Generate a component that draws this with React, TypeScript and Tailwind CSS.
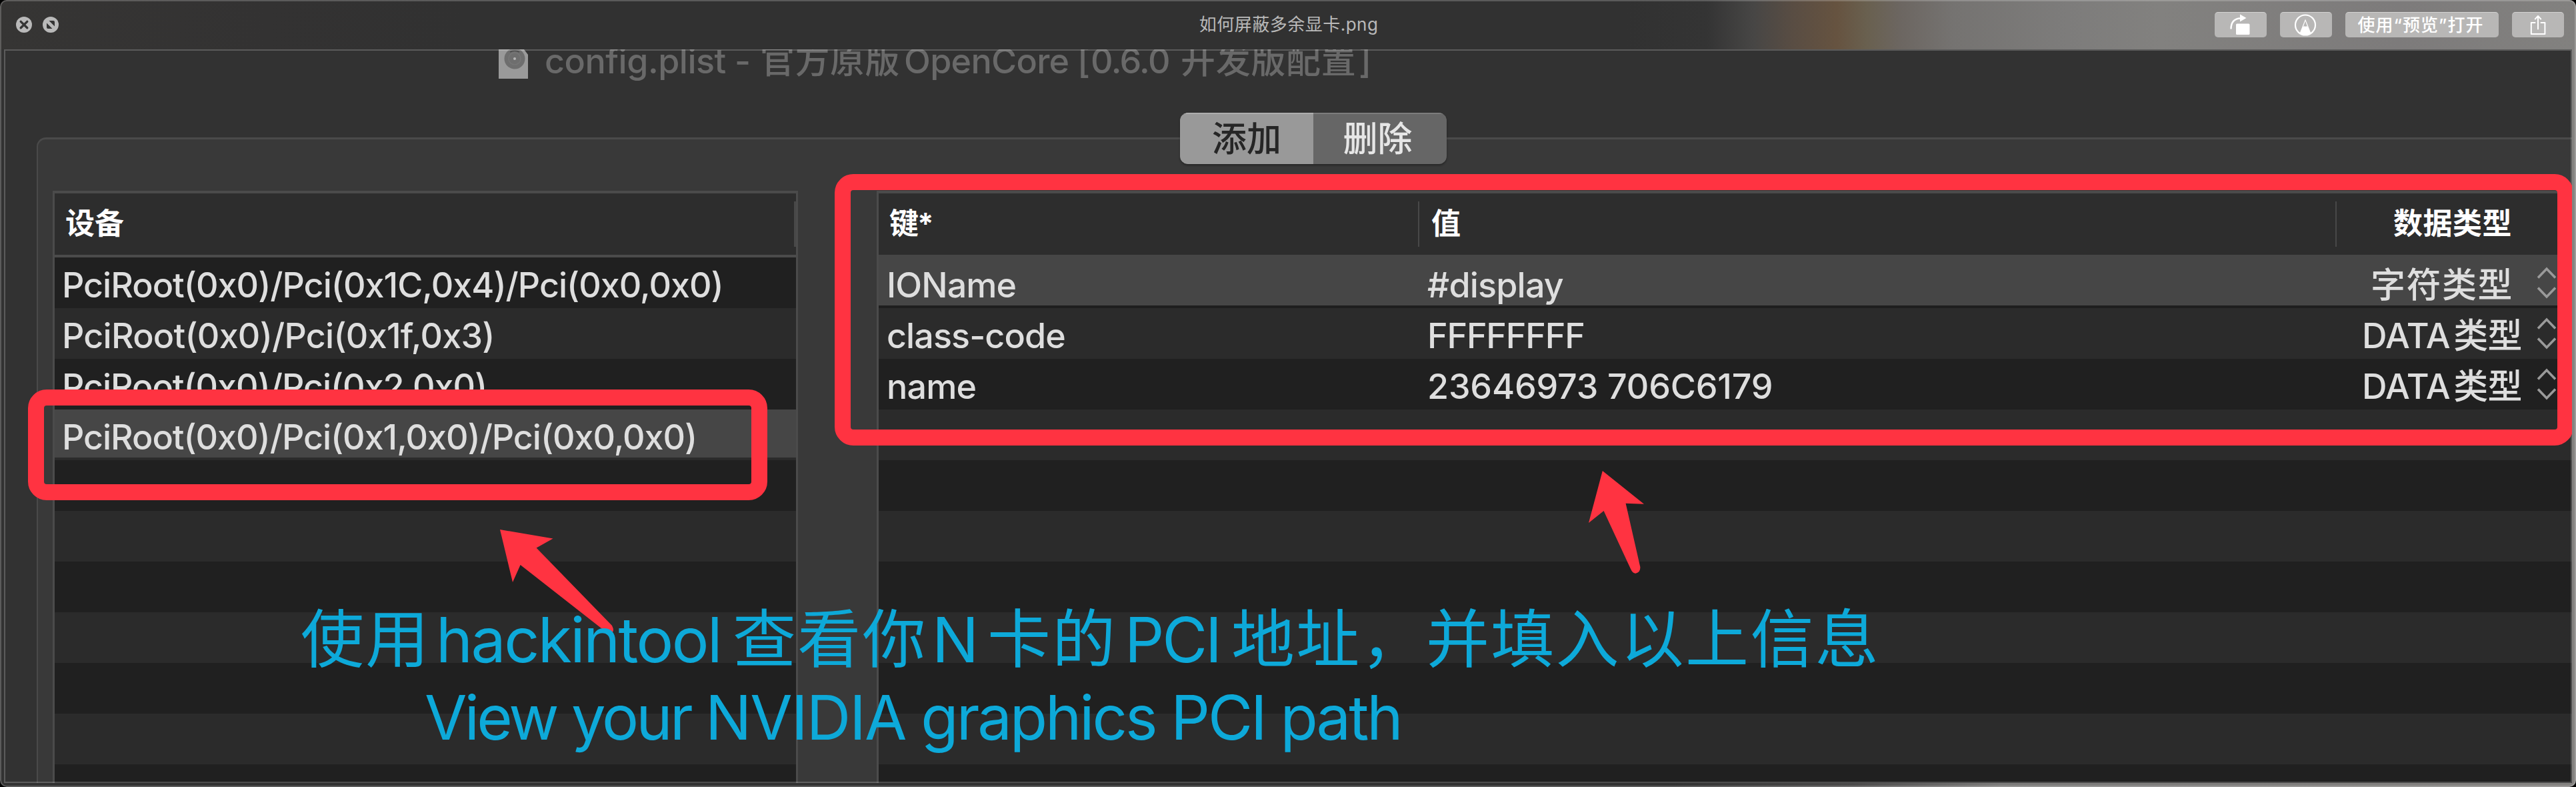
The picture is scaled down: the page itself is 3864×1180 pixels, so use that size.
import type { ReactNode } from "react";
import { clsx } from "clsx";

type Property = { key: string; value: string; type: string; keyClass: string; valueClass: string; typeClass: string };

const devices = [
  { path: "PciRoot(0x0)/Pci(0x1C,0x4)/Pci(0x0,0x0)", spacing: "tracking-[-0.98px]" },
  { path: "PciRoot(0x0)/Pci(0x1f,0x3)", spacing: "tracking-[-0.75px]" },
  { path: "PciRoot(0x0)/Pci(0x2,0x0)", spacing: "tracking-[-1.03px]" },
  { path: "PciRoot(0x0)/Pci(0x1,0x0)/Pci(0x0,0x0)", spacing: "tracking-[-1.03px]" },
];

const dataType = "tracking-[-0.6px] [word-spacing:-8px]";

const properties: Property[] = [
  { key: "IOName", value: "#display", type: "字符类型", keyClass: "tracking-[-0.9px]", valueClass: "tracking-[-0.8px]", typeClass: "tracking-[1.5px]" },
  { key: "class-code", value: "FFFFFFFF", type: "DATA 类型", keyClass: "tracking-[-0.9px]", valueClass: "tracking-[-1.2px]", typeClass: dataType },
  { key: "name", value: "23646973 706C6179", type: "DATA 类型", keyClass: "tracking-[-0.8px]", valueClass: "tracking-[-0.15px]", typeClass: dataType },
];

const SELECTED_DEVICE = 3;
const ROW_COUNT = 11;
const rowIndexes = Array.from({ length: ROW_COUNT }, (_, i) => i);

function ToolButton({ children, wide = false }: { children: ReactNode; wide?: boolean }) {
  return (
    <button
      className={clsx(
        "flex h-[38px] items-center justify-center rounded-[5px] border-t border-white/40 bg-[#b8b7b6] text-white",
        wide ? "w-[230px]" : "w-[78px]",
      )}
    >
      {children}
    </button>
  );
}

function TitleBar() {
  return (
    <header className="flex h-[74px] items-center bg-linear-[90deg,#363534_0px,#333232_400px,#313131_700px,#313131_2440px,#343434_2560px,#474645_2630px,#594d43_2690px,#665340_2755px,#69604f_2800px,#6c6661_2850px,#757371_2930px,#7d7c7b_3100px,#82817f_3240px,#7d7b7b_3600px,#82817f_3864px]">
      <div className="flex flex-1 gap-4 pl-6">
        <svg className="size-6" viewBox="0 0 24 24">
          <circle cx="12" cy="12" r="12" fill="#b9b9b9" />
          <path d="M7.2 7.4 L16.8 16.8 M16.8 7.4 L7.2 16.8" stroke="#343434" strokeWidth="3.4" strokeLinecap="round" />
        </svg>
        <svg className="size-6" viewBox="0 0 24 24">
          <circle cx="12" cy="12" r="12" fill="#b9b9b9" />
          <path d="M9.5 6 H16 Q18 6 18 8 V14.5 Z M6 9.5 V16 Q6 18 8 18 H14.5 Z" fill="#343434" />
        </svg>
      </div>
      <h1 className="pr-1 text-[26px] leading-[38px] tracking-[0.5px] text-[#b9b9b9]">如何屏蔽多余显卡.png</h1>
      <div className="flex flex-1 justify-end gap-5 pr-[18px]">
        <ToolButton>
          <svg className="h-[36px] w-[78px]" viewBox="0 0 78 36" fill="none">
            <path d="M24.5 23.5 C24.5 13 29 7.8 39 7.5" stroke="white" strokeWidth="2.4" />
            <path d="M38 1.5 L47.5 7 L38 12.5 Z" fill="white" />
            <rect x="32" y="15.5" width="20.5" height="16.5" rx="1.5" fill="white" />
          </svg>
        </ToolButton>
        <ToolButton>
          <svg className="h-[36px] w-[78px]" viewBox="0 0 78 36" fill="none">
            <circle cx="38" cy="17.5" r="15" stroke="white" strokeWidth="2.2" />
            <path d="M38 8.5 L46.5 30 Q38 34.5 29.5 30 Z" fill="white" />
            <path d="M38 11.5 L41.3 20.5 Q39.6 18.2 38 20 Q36.4 18.2 34.7 20.5 Z" fill="#b8b7b6" />
          </svg>
        </ToolButton>
        <ToolButton wide>
          <span className="pr-1 text-[26px] font-medium leading-[36px] tracking-[1.06px]">使用“预览”打开</span>
        </ToolButton>
        <ToolButton>
          <svg className="h-[36px] w-[78px]" viewBox="0 0 78 36" fill="none" stroke="white" strokeWidth="2" strokeLinejoin="round" strokeLinecap="round">
            <path d="M34.5 14 H28.8 V31 H49.4 V14 H43.5" />
            <path d="M39 23.5 V4.5 M34.8 8.5 L39 4 L43.2 8.5" />
          </svg>
        </ToolButton>
      </div>
    </header>
  );
}

function DocumentTitle() {
  return (
    <div className="flex h-[132px] items-start pl-[742px]">
      <svg className="h-[44px] w-[44px]" viewBox="0 0 44 44">
        <path d="M0 0 H38 L44 8 V44 H0 Z" fill="#9a9a9a" />
        <circle cx="24" cy="14" r="15.5" fill="#6e6e6e" />
        <circle cx="24" cy="14" r="9" fill="none" stroke="#767676" strokeWidth="1.5" />
        <path d="M17 4 Q24 0 31 4" fill="none" stroke="#4d4d4d" strokeWidth="2" />
        <circle cx="24" cy="14" r="2" fill="#b5b5b5" />
      </svg>
      <div className="-mt-[14px] ml-[25px] flex whitespace-pre text-[52px] font-medium leading-[64px] text-[#696969]">
        <span className="w-[323px] tracking-[-0.5px]">config.plist -</span>
        <span className="w-[216px] tracking-[0.5px]">官方原版</span>
        <span className="w-[260px] tracking-[-0.7px]">OpenCore</span>
        <span className="w-[20px]">[</span>
        <span className="w-[135px] tracking-[-1.5px]">0.6.0</span>
        <span className="w-[267px] tracking-[0.7px]">开发版配置</span>
        <span>]</span>
      </div>
    </div>
  );
}

function SegmentedControl() {
  return (
    <div className="-mt-[40px] ml-[1713px] flex h-[77px] w-[400px] overflow-hidden rounded-[12px] text-[52px] font-medium leading-[75px] shadow-[0_2px_3px_rgba(0,0,0,0.35)]">
      <button className="w-[200px] border-t-2 border-[#adadad] bg-[#999999] text-center text-[#262626]">添加</button>
      <button className="w-[200px] border-t-2 border-[#7c7c7c] bg-[#666666] pr-[7px] text-center text-[#e6e6e6]">删除</button>
    </div>
  );
}

function DeviceTable() {
  return (
    <section className="w-[1118px] shrink-0 border-x-3 border-t-4 border-[#4b4b4b]">
      <div className="flex h-[96px] items-center justify-between border-b-4 border-[#4b4b4b] bg-[#2d2d2d] pl-4">
        <h2 className="-mt-[2px] text-[44px] font-bold leading-[88px] text-white">设备</h2>
        <div className="h-[68px] w-[3px] bg-[#484848]" />
      </div>
      {rowIndexes.map((i) => (
        <div
          key={i}
          className={clsx(
            "h-[76px] whitespace-nowrap pl-[11px] pt-[7px] text-[52px] font-medium leading-[70px] text-[#dedede]",
            i === SELECTED_DEVICE ? "border-b-4 border-[#2b2b2b] bg-[#464646]" : i % 2 ? "bg-[#2b2b2b]" : "bg-[#202020]",
          )}
        >
          <span className={devices[i]?.spacing}>{devices[i]?.path}</span>
        </div>
      ))}
    </section>
  );
}

function Stepper() {
  return (
    <svg className="h-[50px] w-[34px]" viewBox="0 0 34 50" fill="none" stroke="#9a9a9a" strokeWidth="3.6">
      <path d="M4 17.5 L17 4 L30 17.5 M4 32.5 L17 46 L30 32.5" />
    </svg>
  );
}

function PropertyTable() {
  return (
    <section className="flex-1 border-l-3 border-t-4 border-[#4b4b4b]">
      <div className="flex h-[92px] items-center bg-[#2d2d2d] text-[44px] font-bold leading-[88px] text-white">
        <h2 className="-mt-[2px] w-[809px] pl-4 tracking-[-2px]">键*</h2>
        <div className="h-[68px] w-[2px] bg-[#484848]" />
        <h2 className="-mt-[2px] w-[1374px] pl-[18px]">值</h2>
        <div className="h-[68px] w-[2px] bg-[#484848]" />
        <h2 className="-mt-[2px] pl-[85px] tracking-[0.5px]">数据类型</h2>
      </div>
      {rowIndexes.map((i) => {
        const item = properties[i];
        return (
          <div
            key={i}
            className={clsx(
              "flex whitespace-nowrap text-[52px] font-medium leading-[70px] text-[#dedede]",
              i === 0 ? "h-[80px] border-b-4 border-[#1e1e1e] bg-[#464646] pt-[11px]" : "h-[76px] pt-[7px]",
              i > 0 && (i % 2 ? "bg-[#2b2b2b]" : "bg-[#202020]"),
            )}
          >
            {item && (
              <>
                <span className={clsx("w-[811px] pl-3", item.keyClass)}>{item.key}</span>
                <span className={clsx("w-[1376px] pl-3", item.valueClass)}>{item.value}</span>
                <span className={clsx("w-[298px] pl-[18px] text-center", item.typeClass)}>{item.type}</span>
                <div className="pt-[6px]">
                  <Stepper />
                </div>
              </>
            )}
          </div>
        );
      })}
    </section>
  );
}

/* Hand-drawn marks that lie over the window's contents. */
function Annotations() {
  return (
    <div className="absolute -left-[6px] -top-[74px] h-[1180px] w-[3864px]">
      <div className="absolute left-[42px] top-[584px] h-[166px] w-[1109px] rounded-[28px] border-[24px] border-[#ff3341]" />
      <div className="absolute left-[1252px] top-[261px] h-[407px] w-[2608px] rounded-[28px] border-[24px] border-[#ff3341]" />
      <svg className="absolute inset-0 size-full" viewBox="0 0 3864 1180" fill="#ff3341">
        <path d="M750 794 L829.5 807.5 L804.6 821.5 L918 938 Q922 946 918 948.5 Q912 949 902 942 L780.6 847 L769 873 Z" />
        <path d="M2403.8 706 L2466 755.7 L2438.6 754.7 L2460.3 850 Q2461 858 2453.6 859.7 Q2449 860 2446 853 L2405.6 766 L2383 784 Z" />
      </svg>
      <div className="absolute left-[451px] top-[903px] flex items-baseline whitespace-nowrap text-[95px] leading-[112px] tracking-[2.3px] text-[#0da9d9]">
        <span className="w-[203px]">使用</span>
        <span className="w-[445px] text-[93px] tracking-[-2.54px]">hackintool</span>
        <span className="w-[299px]">查看你</span>
        <span className="w-[83px] text-[93px]">N</span>
        <span className="w-[206px]">卡的</span>
        <span className="w-[160px] text-[93px] tracking-[-3.17px]">PCI</span>
        <span>地址，并填入以上信息</span>
      </div>
      <p className="absolute left-[637px] top-[1020px] whitespace-nowrap text-[92px] leading-[112px] tracking-[-3.09px] text-[#0da9d9]">
        <span className="tracking-[-3.8px]">View your </span>
        <span className="tracking-[-1.9px]">NVIDIA</span> graphics PCI path
      </p>
    </div>
  );
}

export default function App() {
  return (
    <div className="h-[1180px] w-[3864px] bg-black font-[Inter,'Noto_Sans_CJK_SC',sans-serif]">
      <div className="relative h-full overflow-hidden rounded-[10px] bg-linear-[90deg,#323232_0px,#323232_2500px,#4c4b4b_2780px,#7d7c7b_3000px,#858381_3864px]">
        <TitleBar />
        <main className="relative ml-[6px] h-[1100px] w-[3852px] overflow-hidden bg-[#323232]">
          <DocumentTitle />
          <div className="ml-[49px] h-[1000px] w-[3860px] rounded-tl-[14px] border-l-2 border-t-3 border-[#4a4a4a] bg-[#393939]">
            <SegmentedControl />
            <div className="mt-[40px] flex gap-[118px] pl-[22px]">
              <DeviceTable />
              <PropertyTable />
            </div>
          </div>
          <div className="absolute inset-0 border-2 border-white/20" />
          <Annotations />
        </main>
        <div className="absolute inset-0 rounded-[10px] border-2 border-white/20" />
      </div>
    </div>
  );
}
